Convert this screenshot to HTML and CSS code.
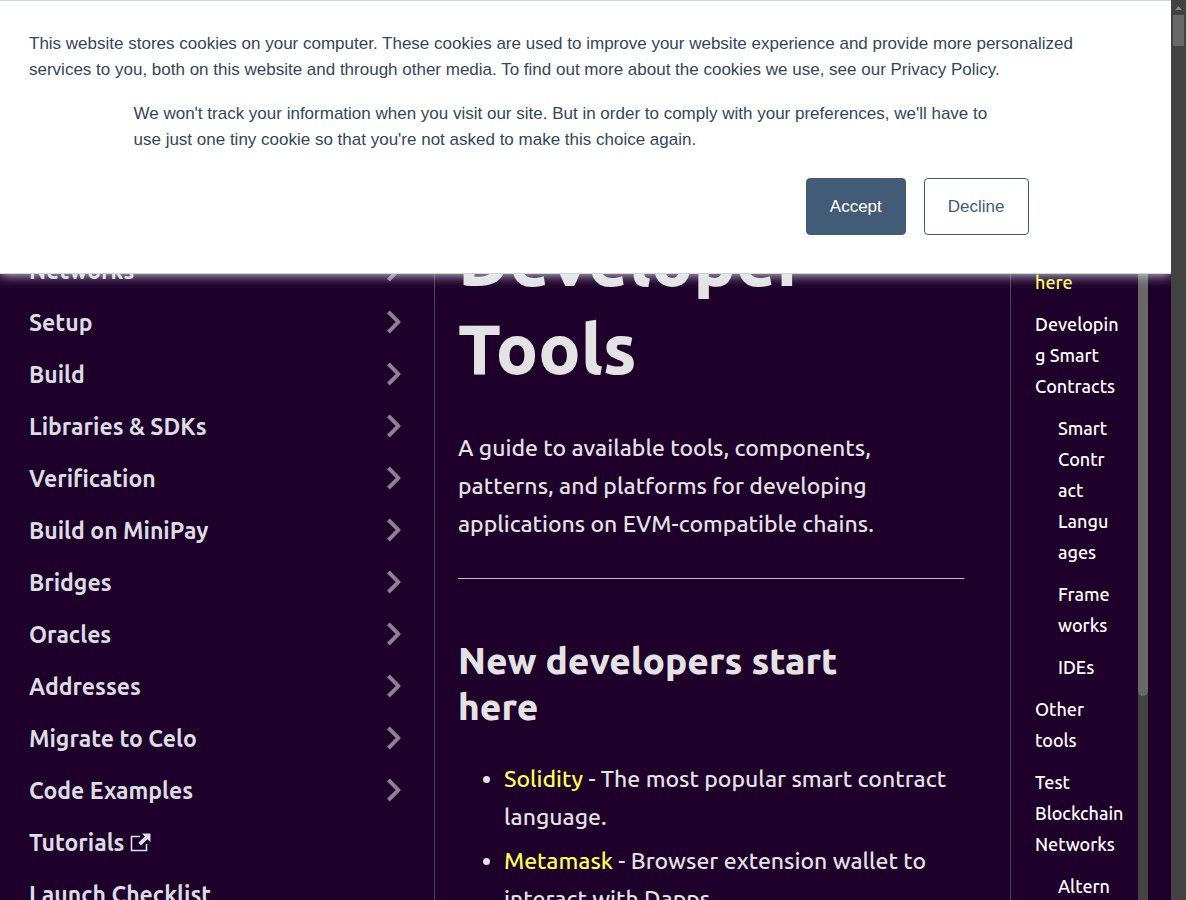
FILE: index.html
```html
<!DOCTYPE html>
<html lang="en">
<head>
<meta charset="utf-8">
<title>Developer Tools</title>
<link rel="stylesheet" href="styles.css">
</head>
<body>
<svg class="sprite" aria-hidden="true">
  <symbol id="chevron" viewBox="0 0 14 24"><path d="M1.4 1.9 L11.3 12 L1.4 22.1" fill="none" stroke="currentColor" stroke-width="3.9"/></symbol>
</svg>
<div class="viewport">
  <div class="page">
    <section class="cookies" aria-label="Cookie notice">
      <p class="cookies-text">This website stores cookies on your computer. These cookies are used to improve your website experience and provide more personalized services to you, both on this website and through other media. To find out more about the cookies we use, see our Privacy Policy.</p>
      <div class="cookies-choice">
        <p class="cookies-text">We won't track your information when you visit our site. But in order to comply with your preferences, we'll have to use just one tiny cookie so that you're not asked to make this choice again.</p>
        <div class="cookies-buttons">
          <button class="btn btn-accept" type="button">Accept</button>
          <button class="btn btn-decline" type="button">Decline</button>
        </div>
      </div>
    </section>
    <div class="docs">
      <nav class="sidebar" aria-label="Docs">
        <a class="nav-link" href="#">Networks<svg class="chev"><use href="#chevron"/></svg></a>
        <a class="nav-link" href="#">Setup<svg class="chev"><use href="#chevron"/></svg></a>
        <a class="nav-link" href="#">Build<svg class="chev"><use href="#chevron"/></svg></a>
        <a class="nav-link" href="#">Libraries &amp; SDKs<svg class="chev"><use href="#chevron"/></svg></a>
        <a class="nav-link" href="#">Verification<svg class="chev"><use href="#chevron"/></svg></a>
        <a class="nav-link" href="#">Build on MiniPay<svg class="chev"><use href="#chevron"/></svg></a>
        <a class="nav-link" href="#">Bridges<svg class="chev"><use href="#chevron"/></svg></a>
        <a class="nav-link" href="#">Oracles<svg class="chev"><use href="#chevron"/></svg></a>
        <a class="nav-link" href="#">Addresses<svg class="chev"><use href="#chevron"/></svg></a>
        <a class="nav-link" href="#">Migrate to Celo<svg class="chev"><use href="#chevron"/></svg></a>
        <a class="nav-link" href="#">Code Examples<svg class="chev"><use href="#chevron"/></svg></a>
        <a class="nav-link nav-external" href="#">Tutorials<svg class="ext" viewBox="0 0 21 19"><path d="M10 3.5H1.5V17.5H16.5V11" fill="none" stroke="currentColor" stroke-width="1.6"/><path d="M12 0.5H20.5V9L17.5 6.2L11 12.4L8.3 9.8L14.8 3.4Z" fill="currentColor"/></svg></a>
        <a class="nav-link" href="#">Launch Checklist</a>
      </nav>
      <main class="article">
        <h1>Developer Tools</h1>
        <p class="lead">A guide to available tools, components, patterns, and platforms for developing applications on EVM-compatible chains.</p>
        <hr>
        <h2>New developers start here</h2>
        <ul class="links">
          <li><a href="#">Solidity</a> - The most popular smart contract language.</li>
          <li><a href="#">Metamask</a> - Browser extension wallet to interact with Dapps.</li>
        </ul>
      </main>
      <aside class="toc">
        <ul class="toc-list">
          <li><a class="active" href="#">here</a></li>
          <li><a href="#">Developin<br>g Smart<br>Contracts</a></li>
          <li class="sub"><a href="#">Smart<br>Contr<br>act<br>Langu<br>ages</a></li>
          <li class="sub"><a href="#">Frame<br>works</a></li>
          <li class="sub"><a href="#">IDEs</a></li>
          <li><a href="#">Other<br>tools</a></li>
          <li><a href="#">Test<br>Blockchain<br>Networks</a></li>
          <li class="sub"><a href="#">Altern</a></li>
        </ul>
        <div class="toc-track"><div class="toc-thumb"></div></div>
      </aside>
    </div>
  </div>
  <div class="scrollbar">
    <svg class="scroll-up" viewBox="0 0 7 4"><path d="M3.5 0L7 4H0Z" fill="currentColor"/></svg>
    <div class="scroll-thumb"></div>
  </div>
</div>
</body>
</html>
```

FILE: styles.css
```css
* { box-sizing: border-box; }
body {
  margin: 0;
  background: #1e002b;
  color: #e3e3e3;
  font-family: Ubuntu, "Noto Sans", sans-serif;
  font-size: 23px;
  font-weight: 500;
}
a { color: inherit; text-decoration: none; }
.sprite { display: none; }
.viewport { display: flex; height: 100vh; overflow: hidden; }
.page { position: relative; flex: 1; min-width: 0; overflow: hidden; }

.cookies {
  position: absolute;
  z-index: 2;
  inset: 0 0 auto;
  padding: 30px 29px 38px;
  background: #fff;
  border: 1px solid #cbd6e2;
  border-width: 1px 0;
  box-shadow: 0 0 12px #eaf0f6;
  color: #33475b;
  font-family: "Liberation Sans", Arial, sans-serif;
  font-size: 17px;
  font-weight: 400;
  line-height: 26px;
}
.cookies-text { max-width: 1080px; margin: 0 0 18px; }
.cookies-choice { max-width: 904px; margin: 0 auto; }
.cookies-choice .cookies-text { max-width: 880px; }
.cookies-buttons { display: flex; justify-content: flex-end; gap: 18px; margin: 25px 9px 0 0; }
.btn {
  height: 57px;
  padding: 0 23px;
  border: 1px solid #425b76;
  border-radius: 4px;
  font: inherit;
}
.btn-accept { background: #425b76; color: #fff; }
.btn-decline { background: #fff; color: #425b76; }

.docs { display: flex; height: 100%; padding-right: 23px; }

.sidebar {
  flex: 0 0 435px;
  padding: 244px 33px 0 29px;
  border-right: 1px solid #444950;
  color: #dadde1;
}
.nav-link {
  display: flex;
  align-items: center;
  justify-content: space-between;
  height: 52px;
  font-weight: 700;
}
.nav-external { justify-content: flex-start; gap: 6px; }
.chev { width: 14px; height: 24px; color: #8f8095; }
.ext { width: 21px; height: 19px; }

.article { flex: 1; min-width: 0; padding: 216px 46px 0 23px; }
h1 { margin: 0 0 37px; font-size: 70px; line-height: 88px; font-weight: 900; }
.lead { margin: 0; line-height: 38px; }
hr { margin: 35px 0 59px; border: 0; border-top: 1px solid #c0bcc8; }
h2 { margin: 0 0 30px; padding-right: 46px; font-size: 37px; line-height: 46px; font-weight: 900; }
.links { margin: 0; padding-left: 46px; line-height: 38px; }
.links li + li { margin-top: 6px; }
.links a { color: #fcff52; }

.toc {
  display: flex;
  flex: 0 0 138px;
  padding-left: 24px;
  border-left: 1px solid #444950;
}
.toc-list {
  flex: 1;
  margin: 0;
  padding: 267px 0 0;
  list-style: none;
  color: #fff;
  font-size: 18px;
  line-height: 31px;
}
.toc-list li { margin-bottom: 11px; white-space: nowrap; }
.toc-list .sub { padding-left: 23px; }
.toc-list .active { color: #fcff52; }
.toc-track { width: 10px; flex: none; background: #444; }
.toc-thumb { height: 696px; border-radius: 0 0 5px 5px; background: #686868; }

.scrollbar {
  display: flex;
  flex: 0 0 15px;
  flex-direction: column;
  align-items: center;
  padding-top: 6px;
  background: #424242;
  color: #868686;
}
.scroll-up { width: 7px; height: 4px; }
.scroll-thumb { width: 11px; height: 31px; margin-top: 5px; background: #686868; }
```
